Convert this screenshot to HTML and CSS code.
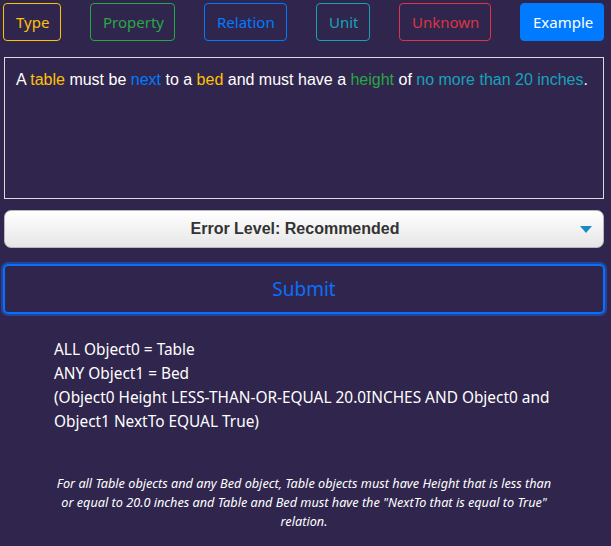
FILE: index.html
```html
<!DOCTYPE html>
<html>
<head>
<meta charset="utf-8">
<link rel="stylesheet" href="styles.css">
</head>
<body>
<div class="page">
  <div class="legend">
    <button class="tag tag-type">Type</button>
    <button class="tag tag-property">Property</button>
    <button class="tag tag-relation">Relation</button>
    <button class="tag tag-unit">Unit</button>
    <button class="tag tag-unknown">Unknown</button>
    <button class="tag tag-example">Example</button>
  </div>
  <div class="editor">A <span class="c-type">table</span> must be <span class="c-relation">next</span> to a <span class="c-type">bed</span> and must have a <span class="c-property">height</span> of <span class="c-unit">no more than 20 inches</span>.</div>
  <div class="select">
    <span class="select-label">Error Level: Recommended</span>
    <span class="select-arrow"></span>
  </div>
  <button class="submit">Submit</button>
  <div class="result">
    <div class="logic">ALL Object0 = Table<br>ANY Object1 = Bed<br>(Object0 Height LESS-THAN-OR-EQUAL 20.0INCHES AND Object0 and Object1 NextTo EQUAL True)</div>
    <p class="summary">For all Table objects and any Bed object, Table objects must have Height that is less than or equal to 20.0 inches and Table and Bed must have the "NextTo that is equal to True" relation.</p>
  </div>
</div>
</body>
</html>
```
FILE: styles.css
```css
html, body {
  margin: 0;
  padding: 0;
  background: #30264d;
}
body {
  font-family: "Noto Sans", "Open Sans", sans-serif;
  color: #ffffff;
}
.page {
  width: 602px;
  padding: 3px 0 0 3px;
}
.legend {
  display: flex;
  justify-content: space-between;
  width: 601px;
}
.tag {
  font-family: "Noto Sans", sans-serif;
  font-size: 15px;
  height: 38px;
  padding: 0 12px;
  border-radius: 4px;
  border: 1px solid;
  background: transparent;
  line-height: 36px;
}
.tag-type { color: #ffc107; border-color: #ffc107; width: 58px; }
.tag-property { color: #28a745; border-color: #28a745; width: 85px; }
.tag-relation { color: #007bff; border-color: #007bff; width: 83px; }
.tag-unit { color: #17a2b8; border-color: #17a2b8; width: 54px; }
.tag-unknown { color: #dc3545; border-color: #dc3545; width: 92px; }
.tag-example { color: #fff; background: #007bff; border-color: #007bff; width: 84px; }

.editor {
  margin: 16px 0 0 1px;
  width: 575px;
  height: 116px;
  border: 1px solid #d9d9e0;
  padding: 12px 12px 12px 11px;
  font-family: "Liberation Sans", Arial, sans-serif;
  font-size: 16px;
  line-height: 20px;
  color: #ffffff;
}
.c-type { color: #ffc107; }
.c-relation { color: #007bff; }
.c-property { color: #28a745; }
.c-unit { color: #17a2b8; }

.select {
  margin: 11px 0 0 1px;
  width: 580px;
  height: 36px;
  padding-right: 18px;
  border: 1px solid #b8b8b8;
  border-radius: 7px;
  background: linear-gradient(#ffffff, #e6e6e6);
  display: flex;
  align-items: center;
  justify-content: center;
  position: relative;
}
.select-label {
  font-family: "Liberation Sans", Arial, sans-serif;
  font-weight: bold;
  font-size: 16px;
  color: #333333;
}
.select-arrow {
  position: absolute;
  right: 11px;
  top: 15px;
  width: 0;
  height: 0;
  border-left: 6px solid transparent;
  border-right: 6px solid transparent;
  border-top: 7px solid #1b8ac3;
}

.submit {
  display: block;
  margin-top: 16px;
  width: 602px;
  height: 50px;
  border: 2px solid #0d6efd;
  border-radius: 5px;
  background: transparent;
  box-shadow: 0 0 0 2px rgba(13, 110, 253, 0.45);
  color: #0d6efd;
  font-family: "Noto Sans", sans-serif;
  font-size: 19px;
}

.result {
  padding: 0 51px;
}
.logic {
  margin-top: 24px;
  font-size: 15.4px;
  line-height: 24px;
}
.summary {
  margin: 40px 0 0;
  font-size: 12.7px;
  font-style: italic;
  line-height: 19px;
  text-align: center;
}
```
